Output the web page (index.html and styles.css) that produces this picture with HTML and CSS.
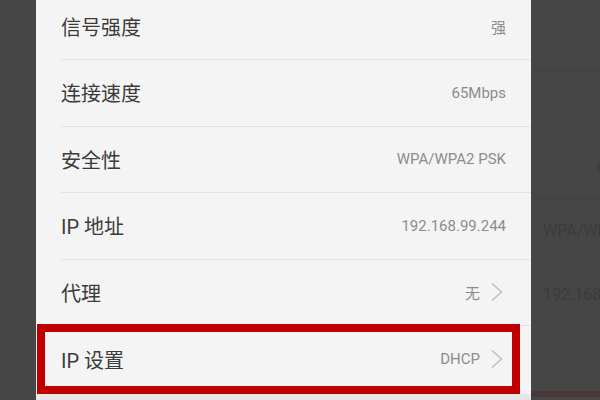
FILE: index.html
```html
<!DOCTYPE html>
<html lang="zh-CN">

<head>
  <meta charset="UTF-8">
  <meta name="viewport" content="width=device-width, initial-scale=1.0">
  <title>WLAN 详情</title>
  <link rel="stylesheet" href="styles.css">
</head>

<body>
  <div class="screen">
    <!-- 左边被遮住的部分 -->
    <div class="shade"></div>

    <!-- 中间的详情面板 -->
    <section class="panel">
      <ul class="rows">
        <li class="row">
          <div class="row-body"><span class="label">信号强度</span><span class="value">强</span></div>
        </li>
        <li class="row">
          <div class="row-body"><span class="label">连接速度</span><span class="value">65Mbps</span></div>
        </li>
        <li class="row">
          <div class="row-body"><span class="label">安全性</span><span class="value">WPA/WPA2 PSK</span></div>
        </li>
        <li class="row">
          <div class="row-body"><span class="label">IP 地址</span><span class="value">192.168.99.244</span></div>
        </li>
        <li class="row">
          <div class="row-body">
            <span class="label">代理</span>
            <span class="value">无</span>
            <svg class="chevron" width="15" height="20" viewBox="0 0 15 20"><path d="M1 1.5 L10.5 10 L1 18.5" /></svg>
          </div>
        </li>
        <li class="row marked">
          <div class="row-body">
            <span class="label">IP 设置</span>
            <span class="value">DHCP</span>
            <svg class="chevron" width="15" height="20" viewBox="0 0 15 20"><path d="M1 1.5 L10.5 10 L1 18.5" /></svg>
          </div>
        </li>
      </ul>
      <div class="panel-foot"></div>
    </section>

    <!-- 右边被遮住的部分，隐约能看到底下的页面 -->
    <div class="shade shade-right">
      <div class="ghost-row"></div>
      <div class="ghost-row line"></div>
      <div class="ghost-row"><span class="ghost-text far">65Mbps</span></div>
      <div class="ghost-row line"><span class="ghost-text">WPA/WPA2 PSK</span></div>
      <div class="ghost-row"><span class="ghost-text">192.168.99.244</span></div>
      <div class="ghost-mark"></div>
    </div>
  </div>
</body>

</html>
```

FILE: styles.css
```css
html,
body {
  margin: 0;
  padding: 0;
  height: 100%;
  overflow: hidden;
}

body {
  font-family: Roboto, "Noto Sans CJK SC", sans-serif;
  background: #464646;
}

.screen {
  display: grid;
  grid-template-columns: 36px 495px 1fr;
  height: 400px;
}

.shade {
  background: #464646;
}

.panel {
  background: #f4f4f4;
  display: flex;
  flex-direction: column;
  overflow: hidden;
}

.rows {
  list-style: none;
  margin: -6.5px 0 0;
  padding: 0;
}

.row {
  height: 66.5px;
}

.row-body {
  box-sizing: border-box;
  height: 100%;
  margin-left: 25px;
  padding-right: 25px;
  border-bottom: 1px solid #e2e2e2;
  display: flex;
  align-items: center;
}

.label {
  flex: 1;
  font-size: 20px;
  color: #3b3b3b;
}

.value {
  font-size: 15px;
  color: #8c8c8c;
}

.chevron {
  margin-left: 11px;
}

.chevron path {
  fill: none;
  stroke: #bdbdbd;
  stroke-width: 1.4;
}

/* 红框标注 */
.marked {
  position: relative;
}

.marked::after {
  content: "";
  position: absolute;
  left: 1px;
  top: -2px;
  right: 11px;
  bottom: -1px;
  border: 8px solid #c00000;
}

.marked .row-body {
  border-bottom: none;
}

.panel-foot {
  flex: 1;
  margin-top: 1px;
  background: #e6e6e6;
}

.shade-right {
  overflow: hidden;
  white-space: nowrap;
}

.ghost-row {
  box-sizing: border-box;
  height: 64px;
  display: flex;
  align-items: center;
  padding-left: 12px;
  font-size: 16px;
  color: #3b3b3b;
}

.ghost-row:first-child {
  height: 70px;
}

.ghost-row.line {
  border-top: 1px solid #414141;
}

.ghost-text.far {
  padding-left: 54px;
}

.ghost-mark {
  height: 6px;
  margin-top: 65px;
  background: #4a3737;
}
```
